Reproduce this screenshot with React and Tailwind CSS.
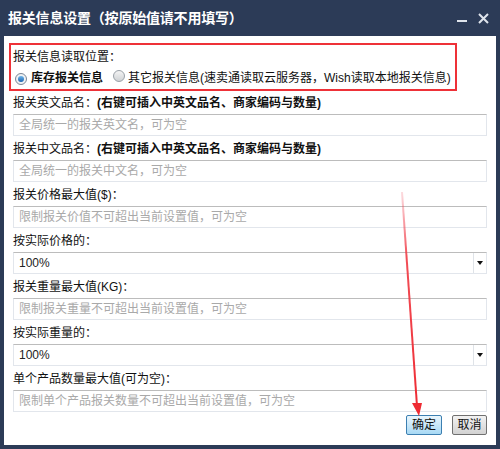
import React from "react";

const font = { fontFamily: '"Liberation Sans", "Noto Sans CJK SC", sans-serif' };

function Radio({ checked }) {
  return (
    <span
      className={`inline-flex items-center justify-center w-[12px] h-[12px] rounded-full border ${
        checked ? "border-[#7b8796] bg-[#eef1f4]" : "border-[#9aa1a8] bg-gradient-to-b from-[#f4f4f4] to-[#cfd2d5]"
      }`}
    >
      {checked && <span className="w-[6px] h-[6px] rounded-full bg-gradient-to-b from-[#6fb6ea] to-[#1764b0]" />}
    </span>
  );
}

function Field({ label, bold, placeholder }) {
  return (
    <div className="mb-[3px]">
      <div className="h-[20px] leading-[20px] text-[12px] text-[#111] whitespace-nowrap">
        {label}
        {bold && <span className="font-bold">{bold}</span>}
      </div>
      <div className="mt-[1px] h-[22px] border border-[#e2e6ec] border-t-[#bcbcbc] flex items-center pl-[5px] text-[12px] text-[#a9a9a9]">
        {placeholder}
      </div>
    </div>
  );
}

function SelectField({ label, value }) {
  return (
    <div className="mb-[3px]">
      <div className="h-[20px] leading-[20px] text-[12px] text-[#111]">{label}</div>
      <div className="mt-[1px] h-[22px] border border-[#e2e6ec] border-t-[#bcbcbc] flex items-center text-[12px] text-[#222]">
        <span className="flex-1 pl-[5px]">{value}</span>
        <span className="w-[13px] h-full border-l border-[#dfe3e8] flex items-center justify-center">
          <span className="w-0 h-0 border-l-[3px] border-r-[3px] border-t-[4px] border-l-transparent border-r-transparent border-t-[#111]" />
        </span>
      </div>
    </div>
  );
}

export default function App() {
  return (
    <div style={font} className="w-[500px] h-[449px] bg-[#2c3b57] flex flex-col overflow-hidden">
      {/* Title bar */}
      <div className="h-[36px] flex items-center justify-between pl-[8px] pr-[11px]">
        <span className="text-white font-bold text-[14px] tracking-[-0.2px]">报关信息设置（按原始值请不用填写）</span>
        <div className="flex items-center gap-[11px] text-[#dfe4ec]">
          <span className="w-[10px] h-[2px] bg-[#dfe4ec] mt-[6px]" />
          <svg width="11" height="11" viewBox="0 0 11 11">
            <path d="M1 1 L10 10 M10 1 L1 10" stroke="#dfe4ec" strokeWidth="2" />
          </svg>
        </div>
      </div>

      {/* Body */}
      <div className="relative flex-1 mx-[4px] mb-[4px] bg-white px-[9px] pt-[7px]">
        <div className="relative pt-[4px] pb-[3px]">
          <div className="absolute -left-[4px] top-0 w-[448px] h-[48px] border-2 border-[#ee3138]" />
          <div className="h-[20px] leading-[20px] text-[12px] text-[#111]">报关信息读取位置：</div>
          <div className="mt-[1px] h-[20px] flex items-center text-[12px] text-[#111] whitespace-nowrap">
            <span className="ml-[2px]"><Radio checked /></span>
            <span className="ml-[4px] font-bold">库存报关信息</span>
            <span className="ml-[10px]"><Radio /></span>
            <span className="ml-[3px]">其它报关信息(速卖通读取云服务器，Wish读取本地报关信息)</span>
          </div>
        </div>

        <div className="mt-[2px]">
          <Field label="报关英文品名：" bold="(右键可插入中英文品名、商家编码与数量)" placeholder="全局统一的报关英文名，可为空" />
          <Field label="报关中文品名：" bold="(右键可插入中英文品名、商家编码与数量)" placeholder="全局统一的报关中文名，可为空" />
          <Field label="报关价格最大值($)：" placeholder="限制报关价值不可超出当前设置值，可为空" />
          <SelectField label="按实际价格的：" value="100%" />
          <Field label="报关重量最大值(KG)：" placeholder="限制报关重量不可超出当前设置值，可为空" />
          <SelectField label="按实际重量的：" value="100%" />
          <Field label="单个产品数量最大值(可为空)：" placeholder="限制单个产品报关数量不可超出当前设置值，可为空" />
        </div>

        <div className="mt-[1px] flex justify-end gap-[10px] text-[12px]">
          <button className="w-[36px] h-[20px] rounded-[2px] border border-[#3c7fb1] bg-gradient-to-b from-[#eaf6fd] to-[#a7d9f5] text-[#111] leading-none">
            确定
          </button>
          <button className="w-[35px] h-[20px] rounded-[2px] border border-[#707070] bg-gradient-to-b from-[#f2f2f2] to-[#d2d2d2] text-[#111] leading-none">
            取消
          </button>
        </div>

        {/* annotation arrow */}
        <svg className="absolute left-0 top-0 pointer-events-none" width="492" height="409">
          <defs>
            <linearGradient id="arr" x1="0" y1="0" x2="0" y2="1">
              <stop offset="0" stopColor="#f25060" stopOpacity="0.2" />
              <stop offset="0.3" stopColor="#f03a44" stopOpacity="0.9" />
              <stop offset="1" stopColor="#ee2b33" />
            </linearGradient>
          </defs>
          <path d="M398 156 L413 370" stroke="url(#arr)" strokeWidth="2" fill="none" />
          <path d="M408 367 L418 367 L415 380 Z" fill="#ee2b33" />
        </svg>
      </div>
    </div>
  );
}
